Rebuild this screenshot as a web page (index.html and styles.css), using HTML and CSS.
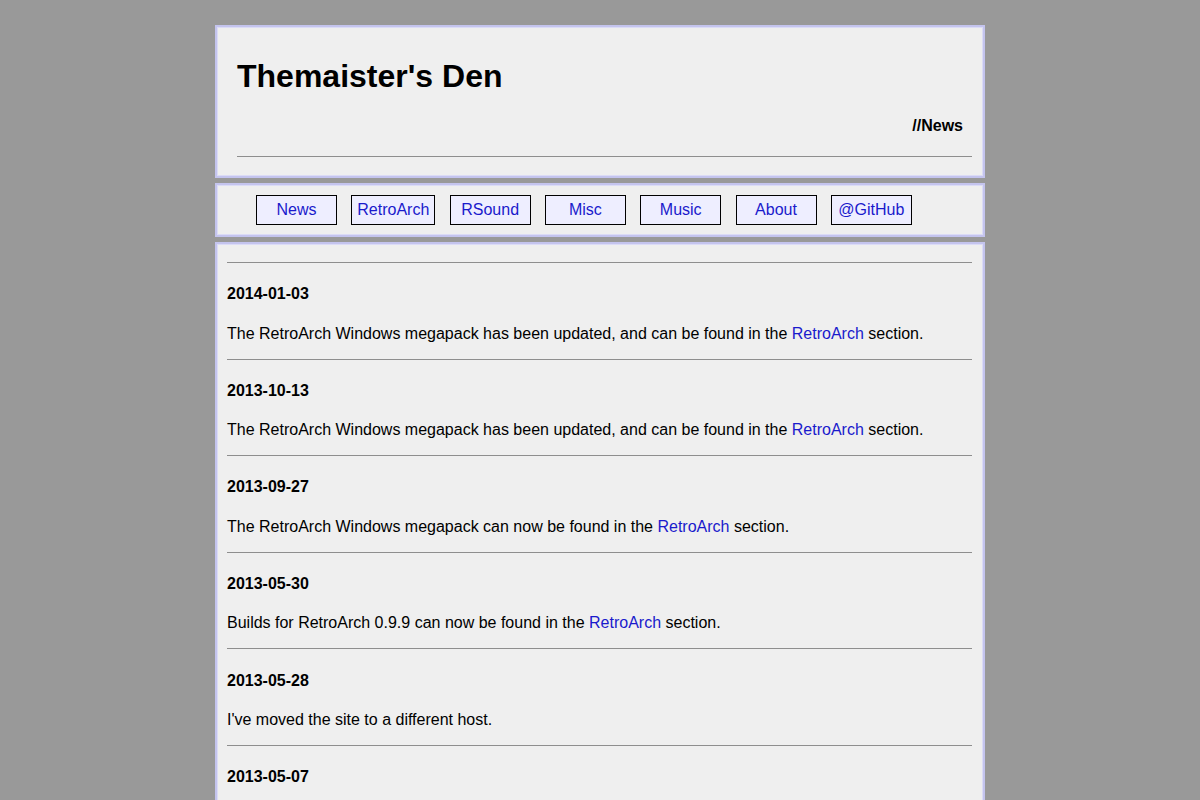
FILE: index.html
```html
<!DOCTYPE html>
<html lang="en">
<head>
    <meta charset="UTF-8">
    <title>Themaister's Den</title>
    <link rel="stylesheet" href="styles.css">
</head>
<body>
    <div class="page">
        <div class="box header">
            <h1>Themaister's Den</h1>
            <h4 class="section">//News</h4>
            <hr>
        </div>

        <div class="box nav">
            <ul>
                <li><a href="#">News</a></li>
                <li><a href="#">RetroArch</a></li>
                <li><a href="#">RSound</a></li>
                <li><a href="#">Misc</a></li>
                <li><a href="#">Music</a></li>
                <li><a href="#">About</a></li>
                <li><a href="#">@GitHub</a></li>
            </ul>
        </div>

        <div class="box content">
            <hr>
            <h4>2014-01-03</h4>
            <p>The RetroArch Windows megapack has been updated, and can be found in the <a href="#">RetroArch</a> section.</p>
            <hr>
            <h4>2013-10-13</h4>
            <p>The RetroArch Windows megapack has been updated, and can be found in the <a href="#">RetroArch</a> section.</p>
            <hr>
            <h4>2013-09-27</h4>
            <p>The RetroArch Windows megapack can now be found in the <a href="#">RetroArch</a> section.</p>
            <hr>
            <h4>2013-05-30</h4>
            <p>Builds for RetroArch 0.9.9 can now be found in the <a href="#">RetroArch</a> section.</p>
            <hr>
            <h4>2013-05-28</h4>
            <p>I've moved the site to a different host.</p>
            <hr>
            <h4>2013-05-07</h4>
            <p>RetroArch 0.9.9 has been released.</p>
            <hr>
        </div>
    </div>
</body>
</html>
```

FILE: styles.css
```css
body {
    margin: 0;
    background: #999999;
    font-family: "Liberation Sans", Arial, sans-serif;
    font-size: 16px;
    color: #000;
}

.page {
    width: 770px;
    margin: 25px auto 0;
}

.box {
    background: #efefef;
    border: 2px solid #c4c4ee;
    box-shadow: inset 0 0 0 1px #dcdcf6;
    margin-bottom: 5px;
}

a {
    color: #1a1acc;
    text-decoration: none;
}

hr {
    border: 0;
    border-top: 1px solid #8e8e8e;
    border-bottom: 1px solid #efefef;
    margin: 8px 0;
}

h1 {
    font-size: 2em;
    margin: 0.67em 0;
}

h4 {
    font-size: 16px;
    margin: 1.33em 0;
}

p {
    margin: 1em 0;
}

/* Header */
.header {
    padding: 10px 11px 10px 20px;
}

.header .section {
    text-align: right;
    padding-right: 9px;
}

/* Navigation */
.nav ul {
    list-style: none;
    margin: 0;
    padding: 10px 0 10px 39px;
    display: flex;
    gap: 14.3px;
}

.nav a {
    display: block;
    min-width: 69px;
    padding: 0 5px;
    line-height: 28px;
    text-align: center;
    background: #eeeeff;
    border: 1px solid #000;
}

/* News list */
.content {
    padding: 10px 11px 10px 10px;
}
```
